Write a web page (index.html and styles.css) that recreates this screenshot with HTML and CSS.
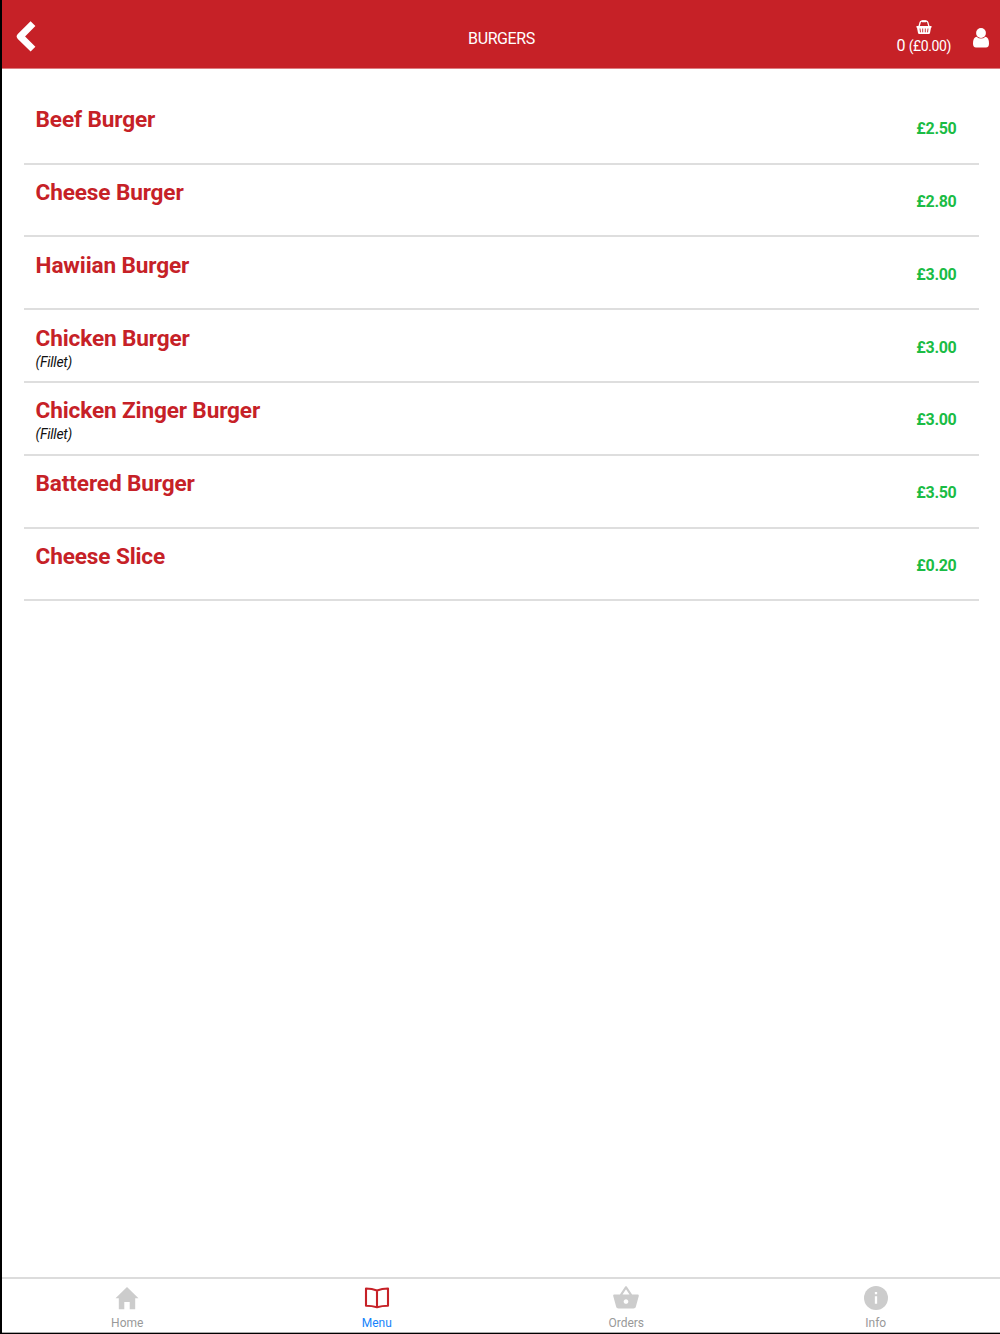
FILE: index.html
```html
<!DOCTYPE html>
<html lang="en">
<head>
<meta charset="utf-8">
<title>Burgers</title>
<link rel="stylesheet" href="styles.css">
</head>
<body>
<div class="app">
  <header class="header">
    <a class="back" aria-label="Back">
      <svg width="22" height="32" viewBox="0 0 22 32"><path d="M18 3.7L5.2 16.5L18 29.2" fill="none" stroke="#fff" stroke-width="6.8" stroke-linejoin="round"/></svg>
    </a>
    <h1 class="title">BURGERS</h1>
    <div class="actions">
      <a class="basket">
        <svg width="16" height="15" viewBox="0 0 16 15">
          <path d="M3 6.5L4.2 2.3Q4.5 1.2 5.6 1.2H10.4Q11.5 1.2 11.8 2.3L13 6.5" fill="none" stroke="#fff" stroke-width="1.3"/>
          <rect x="5.5" y="0.3" width="5" height="1.9" rx="0.8" fill="#fff"/>
          <path d="M1 6H15Q15.7 6 15.7 6.8T15 7.8L14 13Q13.8 14 12.8 14H3.2Q2.2 14 2 13L1 7.8Q0.3 7.6 0.3 6.8T1 6Z" fill="#fff"/>
          <path d="M4 8.5L4.5 12.3M6.7 8.5V12.3M9.3 8.5V12.3M12 8.5L11.5 12.3" stroke="#c62127" stroke-width="0.9"/>
        </svg>
        <span class="basket-total">0 <small>(£0.00)</small></span>
      </a>
      <a class="account" aria-label="Account">
        <svg width="18" height="20" viewBox="0 0 18 20">
          <path d="M4.5 8.7Q1 9.5 1 15.5Q1 19.6 4 19.6H14Q17 19.6 17 15.5Q17 9.5 13.5 8.7Q9 12.5 4.5 8.7Z" fill="#fff"/>
          <circle cx="9" cy="5" r="4.9" fill="#fff"/>
        </svg>
      </a>
    </div>
  </header>

  <main class="content">
    <ul class="items">
      <li class="item"><div><h2 class="name">Beef Burger</h2></div><span class="price">£2.50</span></li>
      <li class="item"><div><h2 class="name">Cheese Burger</h2></div><span class="price">£2.80</span></li>
      <li class="item"><div><h2 class="name">Hawiian Burger</h2></div><span class="price">£3.00</span></li>
      <li class="item"><div><h2 class="name">Chicken Burger</h2><p class="note">(Fillet)</p></div><span class="price">£3.00</span></li>
      <li class="item"><div><h2 class="name">Chicken Zinger Burger</h2><p class="note">(Fillet)</p></div><span class="price">£3.00</span></li>
      <li class="item"><div><h2 class="name">Battered Burger</h2></div><span class="price">£3.50</span></li>
      <li class="item"><div><h2 class="name">Cheese Slice</h2></div><span class="price">£0.20</span></li>
    </ul>
  </main>

  <nav class="tabs">
    <a class="tab">
      <svg width="28" height="28" viewBox="0 0 28 28"><path d="M14 3L2.5 14.3H5.8V25.3H11.3V18H16.7V25.3H22.2V14.3H25.5Z" fill="#ccc"/></svg>
      <span>Home</span>
    </a>
    <a class="tab active">
      <svg width="28" height="28" viewBox="0 0 28 28"><path d="M14 6.5Q9 4.5 3 4.5V21.8Q9 21.8 14 23.3Q19 21.8 25 21.8V4.5Q19 4.5 14 6.5ZM14 6.5V23" fill="none" stroke="#c62127" stroke-width="2.1" stroke-linejoin="round"/></svg>
      <span>Menu</span>
    </a>
    <a class="tab">
      <svg width="28" height="28" viewBox="0 0 24 24"><path d="M17.21 9l-4.38-6.56c-.19-.28-.51-.42-.83-.42-.32 0-.64.14-.83.43L6.79 9H2c-.55 0-1 .45-1 1 0 .09.01.18.04.27l2.54 9.27c.23.84 1 1.46 1.92 1.46h13c.92 0 1.69-.62 1.93-1.46l2.54-9.27L23 10c0-.55-.45-1-1-1h-4.79zM9 9l3-4.4L15 9H9zm3 8c-1.1 0-2-.9-2-2s.9-2 2-2 2 .9 2 2-.9 2-2 2z" fill="#ccc"/></svg>
      <span>Orders</span>
    </a>
    <a class="tab">
      <svg width="28" height="28" viewBox="0 0 28 28">
        <circle cx="14" cy="14" r="12" fill="#ccc"/>
        <path d="M14 8V10.3M14 12.3V19.7" fill="none" stroke="#fff" stroke-width="2.3"/>
      </svg>
      <span>Info</span>
    </a>
  </nav>
</div>
</body>
</html>
```

FILE: styles.css
```css
* {
  box-sizing: border-box;
}

body {
  margin: 0;
  font-family: Roboto, sans-serif;
  background-color: #fff;
}

h1, h2, p, ul {
  margin: 0;
  padding: 0;
}

svg {
  display: block;
}

.app {
  display: flex;
  flex-direction: column;
  height: 1334px;
  border-left: 2px solid #000;
  border-bottom: 1px solid #000;
}

.header {
  display: grid;
  grid-template-columns: 1fr auto 1fr;
  align-items: center;
  height: 69px;
  padding: 4px 10px 0 13px;
  color: #fff;
  background-color: #c62127;
  border-bottom: 1px solid #dd7c80;
}

.title {
  padding: 5px 2px 0 0;
  font-size: 16px;
  font-weight: 400;
  line-height: 20px;
  letter-spacing: -0.4px;
}

.actions {
  display: flex;
  justify-content: flex-end;
  align-items: center;
  gap: 21px;
  padding-top: 4px;
}

.basket {
  display: flex;
  flex-direction: column;
  align-items: center;
}

.basket-total {
  padding-top: 1px;
  font-size: 16px;
  line-height: 20px;
  letter-spacing: -0.4px;
}

.basket-total small {
  font-size: 14px;
}

.content {
  flex: 1;
  padding: 22.9px 21px 0 22px;
}

.items {
  list-style: none;
}

.item {
  display: flex;
  justify-content: space-between;
  height: 72.8px;
  padding: 13.4px 22.5px 0 11.6px;
  border-bottom: 2px solid #dedede;
}

.name {
  font-size: 22.6px;
  font-weight: 700;
  line-height: 29px;
  letter-spacing: -0.14px;
  color: #c62127;
}

.note {
  font-size: 14px;
  font-style: italic;
  line-height: 19px;
  letter-spacing: -0.25px;
  color: #111;
}

.price {
  padding-top: 14px;
  font-size: 16px;
  font-weight: 700;
  line-height: 20px;
  letter-spacing: -0.3px;
  color: #1abc45;
}

.tabs {
  display: grid;
  grid-template-columns: repeat(4, 1fr);
  height: 56px;
  border-top: 2px solid #dcdcdc;
  border-bottom: 1px solid #aaa;
}

.tab {
  display: flex;
  flex-direction: column;
  align-items: center;
  padding: 5px 0 0 1px;
  font-size: 12px;
  line-height: 22px;
  color: #999;
}

.tab.active {
  color: #1683fb;
}
```
